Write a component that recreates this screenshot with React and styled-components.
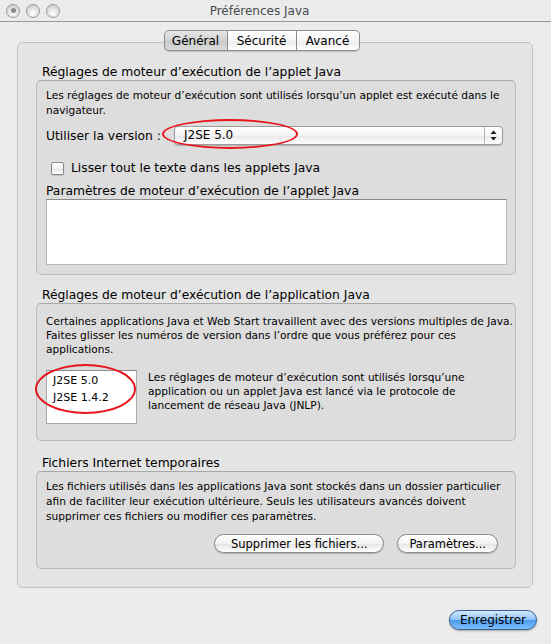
import React from "react";
import styled, { createGlobalStyle } from "styled-components";

const GlobalStyle = createGlobalStyle`
  html, body {
    margin: 0;
    padding: 0;
  }
  body {
    font-family: "DejaVu Sans", "Liberation Sans", sans-serif;
    color: #000;
  }
`;

const Window = styled.div`
  width: 551px;
  height: 644px;
  overflow: hidden;
  display: flex;
  flex-direction: column;
  background-color: #ececec;
  background-image: repeating-linear-gradient(
    0deg,
    #eeeeee 0px,
    #eeeeee 1px,
    #e9e9e9 1px,
    #e9e9e9 2px
  );
`;

const TitleBar = styled.div`
  height: 21px;
  border-bottom: 1px solid #9c9c9c;
  display: grid;
  grid-template-columns: 64px 1fr 96px;
  align-items: center;
`;

const Lights = styled.div`
  display: flex;
  gap: 6px;
  padding-left: 6px;
`;

const Light = styled.span`
  width: 14px;
  height: 14px;
  border-radius: 50%;
  border: 1px solid #9a9a9a;
  box-sizing: border-box;
  background: radial-gradient(circle at 50% 70%, #ffffff 0%, #e4e4e4 45%, #c4c4c4 100%);
  display: flex;
  align-items: center;
  justify-content: center;

  &::after {
    content: "";
    width: 5px;
    height: 5px;
    border-radius: 50%;
    background: ${(p) => (p.$dot ? "#8a8a8a" : "transparent")};
  }
`;

const Title = styled.div`
  text-align: center;
  font-size: 12px;
  color: #4a4a4a;
`;

const Body = styled.div`
  display: flex;
  flex-direction: column;
`;

const Tabs = styled.div`
  display: flex;
  justify-content: center;
  padding-right: 28px;
  margin-top: 8px;
  position: relative;
  z-index: 1;
`;

const Tab = styled.div`
  height: 21px;
  width: ${(p) => p.$w}px;
  box-sizing: border-box;
  display: flex;
  align-items: center;
  justify-content: center;
  font-size: 12px;
  border: 1px solid #8d8d8d;
  border-left: ${(p) => (p.$first ? "1px solid #8d8d8d" : "none")};
  border-radius: ${(p) => (p.$first ? "5px 0 0 5px" : p.$last ? "0 5px 5px 0" : "0")};
  background: ${(p) =>
    p.$active
      ? "linear-gradient(#e6e6e6, #d2d2d2 50%, #c8c8c8 51%, #dadada)"
      : "linear-gradient(#ffffff, #f6f6f6 50%, #ececec 51%, #ffffff)"};
  box-shadow: 0 1px 1px rgba(0, 0, 0, 0.15);
`;

const Panel = styled.div`
  margin: -9px 18px 0 17px;
  padding: 21px 16px 18px 18px;
  border: 1px solid #c2c2c2;
  border-radius: 6px;
  background: #e4e4e4;
`;

const Heading = styled.div`
  font-size: 12.3px;
  line-height: 16px;
  padding-left: 6px;
  margin-top: ${(p) => p.$top || 0}px;
`;

const Box = styled.div`
  background: #dddddd;
  border: 1px solid #bcbcbc;
  border-top-color: #a8a8a8;
  border-radius: 5px;
  padding: ${(p) => p.$pad};
  display: flex;
  flex-direction: column;
`;

const Note = styled.p`
  margin: 0;
  font-size: 10.6px;
  line-height: ${(p) => p.$lh || 15}px;
  white-space: nowrap;
`;

const VersionRow = styled.div`
  margin-top: 8px;
  display: flex;
  align-items: center;
  position: relative;
  font-size: 12.3px;
`;

const Select = styled.div`
  flex: 1;
  margin: 0 4px 0 13px;
  height: 19px;
  box-sizing: border-box;
  border: 1px solid #9b9b9b;
  border-radius: 4px;
  display: flex;
  background: linear-gradient(#ffffff, #f4f4f4 50%, #e8e8e8 51%, #ffffff);
  box-shadow: 0 1px 1px rgba(0, 0, 0, 0.2);
  font-size: 12px;
`;

const SelectValue = styled.span`
  flex: 1;
  padding-left: 9px;
  line-height: 17px;
`;

const SelectArrows = styled.span`
  width: 17px;
  border-left: 1px solid #b4b4b4;
  display: flex;
  align-items: center;
  justify-content: center;
`;

const Ellipse = styled.span`
  position: absolute;
  left: ${(p) => p.$x}px;
  top: ${(p) => p.$y}px;
  width: ${(p) => p.$w}px;
  height: ${(p) => p.$h}px;
  box-sizing: border-box;
  border: 2.5px solid #e8141b;
  border-radius: 50%;
  pointer-events: none;
`;

const CheckRow = styled.label`
  margin-top: 15px;
  padding-left: 5px;
  display: flex;
  align-items: center;
  gap: 7px;
  height: 16px;
  font-size: 12.3px;
`;

const CheckBox = styled.span`
  width: 13px;
  height: 13px;
  box-sizing: border-box;
  border: 1px solid #8a8a8a;
  border-radius: 2px;
  background: linear-gradient(#ffffff, #f0f0f0 50%, #e2e2e2 51%, #ffffff);
  box-shadow: 0 1px 1px rgba(0, 0, 0, 0.15);
`;

const FieldLabel = styled.div`
  margin-top: 7px;
  font-size: 12.3px;
  line-height: 16px;
`;

const TextArea = styled.div`
  height: 66px;
  box-sizing: border-box;
  background: #fff;
  border: 1px solid #b8b8b8;
  border-top-color: #8a8a8a;
`;

const OrderRow = styled.div`
  margin-top: 14px;
  display: flex;
  gap: 11px;
  align-items: flex-start;
`;

const ListWrap = styled.div`
  position: relative;
`;

const List = styled.div`
  width: 91px;
  height: 54px;
  box-sizing: border-box;
  background: #fff;
  border: 1px solid #a8a8a8;
  border-top-color: #8a8a8a;
  padding: 1px 0 0 6px;
  font-size: 11px;
  line-height: 17px;
`;

const ButtonRow = styled.div`
  margin-top: 10px;
  display: flex;
  justify-content: flex-end;
  gap: 13px;
  padding-right: 9px;
`;

const PillButton = styled.button`
  height: 19px;
  padding: 0 ${(p) => p.$px || 12}px;
  border-radius: 10px;
  border: 1px solid #8a8a8a;
  font-family: inherit;
  font-size: 11.5px;
  color: #000;
  background: linear-gradient(#ffffff, #f3f3f3 50%, #e4e4e4 51%, #ffffff);
  box-shadow: 0 1px 1px rgba(0, 0, 0, 0.2);
`;

const Footer = styled.div`
  display: flex;
  justify-content: flex-end;
  padding: 22px 14px 0 0;
`;

const DefaultButton = styled.button`
  width: 88px;
  height: 20px;
  border-radius: 10px;
  border: 1px solid #3a5f96;
  font-family: inherit;
  font-size: 12px;
  color: #000;
  background: linear-gradient(#d4eaff, #8ec3f7 48%, #4d9bef 52%, #7ec0fb);
  box-shadow: 0 1px 2px rgba(0, 0, 0, 0.3);
`;

const Arrows = () => (
  <svg width="7" height="11" viewBox="0 0 7 11">
    <path d="M3.5 0.5 L6.5 4 L0.5 4 Z" fill="#1b1b1b" />
    <path d="M3.5 10.5 L6.5 7 L0.5 7 Z" fill="#1b1b1b" />
  </svg>
);

export default function App() {
  return (
    <Window>
      <GlobalStyle />
      <TitleBar>
        <Lights>
          <Light $dot />
          <Light />
          <Light />
        </Lights>
        <Title>Préférences Java</Title>
        <span />
      </TitleBar>

      <Body>
        <Tabs>
          <Tab $w={64} $first $active>Général</Tab>
          <Tab $w={69}>Sécurité</Tab>
          <Tab $w={63} $last>Avancé</Tab>
        </Tabs>

        <Panel>
          <Heading>Réglages de moteur d’exécution de l’applet Java</Heading>
          <Box $pad="7px 8px 9px 9px">
            <Note>
              Les réglages de moteur d’exécution sont utilisés lorsqu’un applet est exécuté dans le
              <br />
              navigateur.
            </Note>
            <VersionRow>
              <span>Utiliser la version :</span>
              <Select>
                <SelectValue>J2SE 5.0</SelectValue>
                <SelectArrows>
                  <Arrows />
                </SelectArrows>
              </Select>
              <Ellipse $x={116} $y={-7} $w={136} $h={30} />
            </VersionRow>
            <CheckRow>
              <CheckBox />
              Lisser tout le texte dans les applets Java
            </CheckRow>
            <FieldLabel>Paramètres de moteur d’exécution de l’applet Java</FieldLabel>
            <TextArea />
          </Box>

          <Heading $top={12}>Réglages de moteur d’exécution de l’application Java</Heading>
          <Box $pad="10px 8px 16px 9px">
            <Note $lh={14}>
              Certaines applications Java et Web Start travaillent avec des versions multiples de Java.
              <br />
              Faites glisser les numéros de version dans l’ordre que vous préférez pour ces
              <br />
              applications.
            </Note>
            <OrderRow>
              <ListWrap>
                <List>
                  <div>J2SE 5.0</div>
                  <div>J2SE 1.4.2</div>
                </List>
                <Ellipse $x={-11} $y={-6} $w={101} $h={50} />
              </ListWrap>
              <Note $lh={14}>
                Les réglages de moteur d’exécution sont utilisés lorsqu’une
                <br />
                application ou un applet Java est lancé via le protocole de
                <br />
                lancement de réseau Java (JNLP).
              </Note>
            </OrderRow>
          </Box>

          <Heading $top={14}>Fichiers Internet temporaires</Heading>
          <Box $pad="7px 8px 15px 9px">
            <Note>
              Les fichiers utilisés dans les applications Java sont stockés dans un dossier particulier
              <br />
              afin de faciliter leur exécution ultérieure. Seuls les utilisateurs avancés doivent
              <br />
              supprimer ces fichiers ou modifier ces paramètres.
            </Note>
            <ButtonRow>
              <PillButton $px={16}>Supprimer les fichiers...</PillButton>
              <PillButton $px={11}>Paramètres...</PillButton>
            </ButtonRow>
          </Box>
        </Panel>

        <Footer>
          <DefaultButton>Enregistrer</DefaultButton>
        </Footer>
      </Body>
    </Window>
  );
}
